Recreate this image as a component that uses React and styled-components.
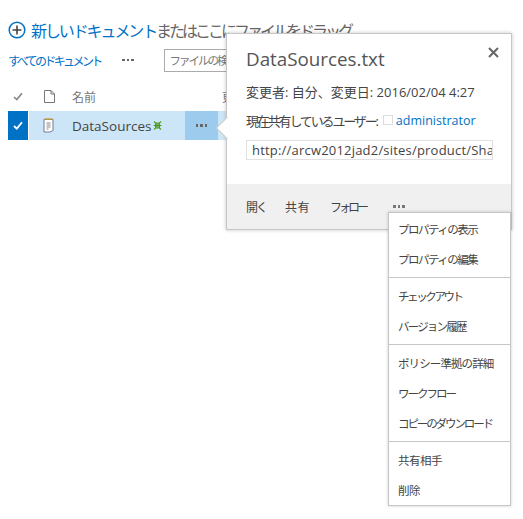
import React from 'react';
import styled, { createGlobalStyle } from 'styled-components';

const Global = createGlobalStyle`
  html, body { margin: 0; padding: 0; background: #fff; }
  body {
    width: 523px;
    height: 519px;
    overflow: hidden;
    font-family: "Open Sans", "Noto Sans CJK JP", sans-serif;
    color: #444;
  }
`;

const Page = styled.div`
  position: relative;
  width: 523px;
  height: 519px;
  padding: 19px 0 0 8px;
  box-sizing: border-box;
`;

const NewRow = styled.div`
  display: flex;
  align-items: center;
  gap: 5px;
  height: 22px;
  font-family: "Noto Sans CJK JP", sans-serif;
  font-size: 16px;
  letter-spacing: -3px;
  color: #666;
  white-space: nowrap;
`;

const NewLink = styled.span`
  letter-spacing: -2.1px;
  color: #0072c6;
`;

const ViewRow = styled.div`
  display: flex;
  align-items: center;
  height: 24px;
  margin-top: 7px;
`;

const ViewLink = styled.span`
  width: 114px;
  font-family: "Noto Sans CJK JP", sans-serif;
  font-size: 12px;
  letter-spacing: -2.6px;
  color: #0072c6;
  white-space: nowrap;
`;

const Dots = styled.span`
  display: flex;
  gap: 2px;
  align-items: center;
  & > i {
    display: block;
    width: 2.5px;
    height: 2.5px;
    background: ${({ $color }) => $color || '#666'};
  }
`;

const SearchBox = styled.div`
  margin-left: 30px;
  width: 100px;
  height: 23px;
  box-sizing: border-box;
  border: 1px solid #ababab;
  padding-left: 5px;
  font-family: "Noto Sans CJK JP", sans-serif;
  font-size: 11.5px;
  letter-spacing: -2px;
  line-height: 20px;
  color: #777;
  white-space: nowrap;
  overflow: hidden;
`;

const HeaderRow = styled.div`
  display: flex;
  align-items: center;
  height: 28px;
  margin-top: 10px;
  margin-bottom: 1px;
`;

const HeadCheck = styled.span`
  display: flex;
  justify-content: center;
  width: 20px;
  margin-right: 16px;
`;

const HeadFile = styled.span`
  display: flex;
  width: 28px;
`;

const HeadName = styled.span`
  width: ${({ $w }) => $w}px;
  font-family: "Noto Sans CJK JP", sans-serif;
  font-size: 12px;
  color: #777;
  white-space: nowrap;
`;

const SelectedRow = styled.div`
  display: flex;
  height: 29px;
`;

const CheckCell = styled.div`
  display: flex;
  align-items: center;
  justify-content: center;
  width: 20px;
  background: #0072c6;
`;

const NameCell = styled.div`
  display: flex;
  align-items: center;
  width: 156px;
  margin-left: 1px;
  padding-left: 14px;
  box-sizing: border-box;
  background: #cde6f7;
`;

const FileName = styled.span`
  margin-left: 18px;
  font-size: 13.5px;
  color: #444;
`;

const NewBadge = styled.span`
  display: flex;
  margin-left: 2px;
`;

const MenuCell = styled.div`
  display: flex;
  align-items: center;
  justify-content: center;
  width: 33px;
  background: #9ccbee;
`;

const RestCell = styled.div`
  width: 12px;
  background: #cde6f7;
`;

const Callout = styled.div`
  position: absolute;
  left: 226px;
  top: 33px;
  width: 286px;
  height: 197px;
  box-sizing: border-box;
  display: flex;
  flex-direction: column;
  background: #fff;
  border: 1px solid #c6c6c6;
  box-shadow: 0 0 4px rgba(0, 0, 0, 0.22);
`;

const Beak = styled.span`
  position: absolute;
  left: -8px;
  top: 86px;
  width: 15px;
  height: 15px;
  background: #fff;
  border-left: 1px solid #c6c6c6;
  border-bottom: 1px solid #c6c6c6;
  transform: rotate(45deg);
`;

const CloseIcon = styled.svg`
  position: absolute;
  right: 12px;
  top: 13px;
`;

const CalloutBody = styled.div`
  position: relative;
  flex: 1;
  padding: 12px 19px 0;
`;

const Title = styled.div`
  font-size: 18.8px;
  line-height: 27px;
  color: #555;
`;

const Line = styled.div`
  display: flex;
  align-items: center;
  height: 20px;
  margin-top: ${({ $top }) => $top}px;
  font-size: 13px;
  letter-spacing: ${({ $spacing }) => $spacing}px;
  color: #444;
  white-space: nowrap;
`;

const Placeholder = styled.span`
  width: 8px;
  height: 8px;
  margin: 0 3px 0 6px;
  border: 1px solid #ddd;
`;

const UserLink = styled.span`
  font-size: 12.5px;
  letter-spacing: 0;
  color: #0072c6;
`;

const UrlInput = styled.input`
  display: block;
  height: 20px;
  margin: 10px 0 0;
  padding: 0 0 0 5px;
  border: 1px solid #e1e1e1;
  border-radius: 0;
  outline: none;
  box-sizing: border-box;
  width: 247px;
  font-family: "Open Sans", sans-serif;
  font-size: 13px;
  letter-spacing: 0.2px;
  color: #444;
`;

const CalloutFooter = styled.div`
  display: flex;
  align-items: center;
  height: 45px;
  padding: 0 0 0 19px;
  background: #f0f0f0;
  font-family: "Noto Sans CJK JP", sans-serif;
  font-size: 12px;
  color: #444;
`;

const Action = styled.span`
  width: ${({ $w }) => $w}px;
  letter-spacing: ${({ $spacing }) => $spacing}px;
  white-space: nowrap;
`;

const Menu = styled.div`
  position: absolute;
  left: 388px;
  top: 212px;
  width: 123px;
  height: 294px;
  box-sizing: border-box;
  background: #fff;
  border: 1px solid #c6c6c6;
  box-shadow: 0 0 3px rgba(0, 0, 0, 0.2);
  padding-top: 2px;
`;

const MenuGroup = styled.div`
  border-top: ${({ $first }) => ($first ? 'none' : '1px solid #c6c6c6')};
  padding-top: ${({ $first }) => ($first ? '0' : '4px')};
  padding-bottom: 2px;
`;

const MenuItem = styled.div`
  height: 30px;
  line-height: 29px;
  padding-left: 9px;
  font-family: "Noto Sans CJK JP", sans-serif;
  font-size: 11.5px;
  letter-spacing: ${({ $spacing }) => $spacing}px;
  color: #444;
  white-space: nowrap;
`;

const menuGroups = [
  [
    { label: 'プロパティの表示', spacing: -1.5 },
    { label: 'プロパティの編集', spacing: -1.5 },
  ],
  [
    { label: 'チェックアウト', spacing: -2.4 },
    { label: 'バージョン履歴', spacing: -1.8 },
  ],
  [
    { label: 'ポリシー準拠の詳細', spacing: -0.9 },
    { label: 'ワークフロー', spacing: -2 },
    { label: 'コピーのダウンロード', spacing: -2.1 },
  ],
  [
    { label: '共有相手', spacing: -0.5 },
    { label: '削除', spacing: -0.5 },
  ],
];

const ThreeDots = ({ color }) => (
  <Dots $color={color}>
    <i />
    <i />
    <i />
  </Dots>
);

const App = () => {
  return (
    <Page>
      <Global />
      <NewRow>
        <svg width="18" height="18" viewBox="0 0 18 18">
          <circle cx="9" cy="9" r="7.8" fill="none" stroke="#0072c6" strokeWidth="1.5" />
          <path d="M9 4.5v9M4.5 9h9" stroke="#444" strokeWidth="1.6" />
        </svg>
        <span>
          <NewLink>新しいドキュメント</NewLink>またはここにファイルをドラッグ
        </span>
      </NewRow>
      <ViewRow>
        <ViewLink>すべてのドキュメント</ViewLink>
        <ThreeDots />
        <SearchBox>ファイルの検索</SearchBox>
      </ViewRow>
      <HeaderRow>
        <HeadCheck>
          <svg width="10" height="9" viewBox="0 0 10 9">
            <path d="M1 5l2.8 2.6L9 1.2" fill="none" stroke="#888" strokeWidth="1.7" />
          </svg>
        </HeadCheck>
        <HeadFile>
          <svg width="11" height="13" viewBox="0 0 11 13">
            <path d="M.5.5h6.5l3.5 3.5v8.5h-10zM7 .5v3.5h3.5" fill="none" stroke="#777" />
          </svg>
        </HeadFile>
        <HeadName $w={150}>名前</HeadName>
        <HeadName>更新</HeadName>
      </HeaderRow>
      <SelectedRow>
        <CheckCell>
          <svg width="10" height="9" viewBox="0 0 10 9">
            <path d="M1 5l2.8 2.6L9 1.2" fill="none" stroke="#fff" strokeWidth="1.8" />
          </svg>
        </CheckCell>
        <NameCell>
          <svg width="11" height="15" viewBox="0 0 11 15">
            <path d="M1 1.5h9v11l-3 1.5H1z" fill="#fff" stroke="#77779a" />
            <path d="M1.5 1h8" stroke="#c9a23f" strokeWidth="1.5" />
            <path d="M3.5 5h4M3.5 7h4M3.5 9h4M3.5 11h2" stroke="#888" />
          </svg>
          <FileName>DataSources</FileName>
          <NewBadge>
            <svg width="9" height="9" viewBox="0 0 9 9">
              <path d="M1 .5l1.5 1.5h4L8 .5M1 8.5l1.5-1.5h4L8 8.5M2.5 2v5M6.5 2v5M.5 4.5h8M3 3.3h3M3 5.7h3" fill="none" stroke="#4d9a1f" strokeWidth="1.1" />
            </svg>
          </NewBadge>
        </NameCell>
        <MenuCell>
          <ThreeDots color="#666" />
        </MenuCell>
        <RestCell />
      </SelectedRow>
      <Callout>
        <CalloutBody>
          <Beak />
          <CloseIcon width="11" height="11" viewBox="0 0 11 11">
            <path d="M1 1l9 9M10 1l-9 9" stroke="#666" strokeWidth="2" />
          </CloseIcon>
          <Title>DataSources.txt</Title>
          <Line $top={8} $spacing={0}>変更者: 自分、変更日: 2016/02/04 4:27</Line>
          <Line $top={9} $spacing={-2.15}>
            現在共有しているユーザー:
            <Placeholder />
            <UserLink>administrator</UserLink>
          </Line>
          <UrlInput readOnly value="http://arcw2012jad2/sites/product/Shared Documents/DataSources.txt" />
        </CalloutBody>
        <CalloutFooter>
          <Action $w={39} $spacing={-2}>開く</Action>
          <Action $w={45} $spacing={0.5}>共有</Action>
          <Action $w={63} $spacing={-3}>フォロー</Action>
          <ThreeDots color="#777" />
        </CalloutFooter>
      </Callout>
      <Menu>
        {menuGroups.map((items, i) => (
          <MenuGroup key={items[0].label} $first={i === 0}>
            {items.map((item) => (
              <MenuItem key={item.label} $spacing={item.spacing}>{item.label}</MenuItem>
            ))}
          </MenuGroup>
        ))}
      </Menu>
    </Page>
  );
};

export default App;
